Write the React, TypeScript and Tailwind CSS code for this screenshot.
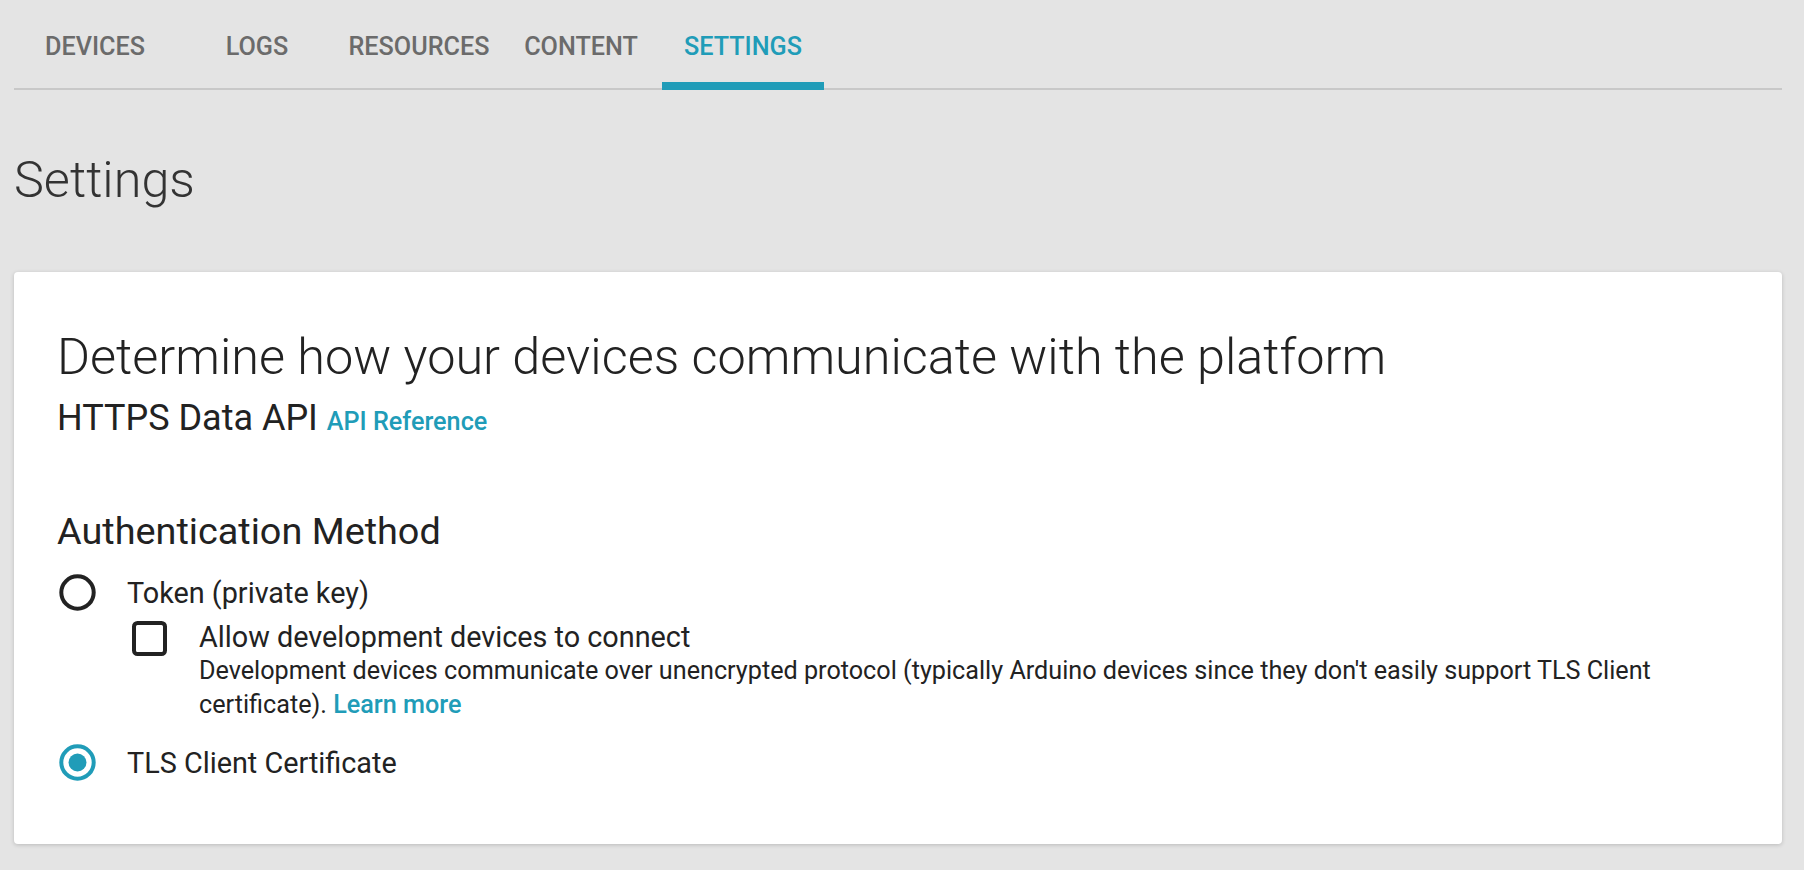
import React from "react";

const tabs = ["DEVICES", "LOGS", "RESOURCES", "CONTENT", "SETTINGS"];

function Radio({ checked }: { checked: boolean }) {
  return (
    <svg width="37" height="37" viewBox="0 0 37 37" className="shrink-0">
      <circle
        cx="18.5"
        cy="18.5"
        r="16.2"
        fill="none"
        stroke={checked ? "#209cb8" : "#222222"}
        strokeWidth="4"
      />
      {checked && <circle cx="18.5" cy="18.5" r="9" fill="#209cb8" />}
    </svg>
  );
}

function Checkbox() {
  return (
    <svg width="35" height="35" viewBox="0 0 35 35" className="shrink-0">
      <rect x="2" y="2" width="31" height="31" rx="3.5" fill="none" stroke="#222222" strokeWidth="4" />
    </svg>
  );
}

export default function App() {
  return (
    <div
      className="min-h-screen w-full bg-[#e4e4e4] text-[#222222]"
      style={{ fontFamily: "Roboto, 'Liberation Sans', sans-serif" }}
    >
      <div className="ml-[14px] mr-[22px]">
        <div className="relative flex h-[90px] border-b-2 border-[#c8c8c8]">
          {tabs.map((t) => {
            const active = t === "SETTINGS";
            return (
              <div
                key={t}
                className={`relative flex w-[162px] justify-center pt-[35px] text-[25.2px] font-medium leading-[24.5px] ${
                  active ? "text-[#209cb8]" : "text-[#6b6b6b]"
                }`}
              >
                {t}
                {active && <span className="absolute -bottom-[2px] left-0 right-0 h-[8px] bg-[#209cb8]" />}
              </div>
            );
          })}
        </div>

        <h1 className="mt-[65px] text-[50.4px] font-light leading-[49px] text-[#333333]">Settings</h1>

        <div className="mt-[68px] h-[572px] rounded-[4px] bg-white pl-[43px] pr-[44px] pt-[62px] shadow-[0_1px_4px_rgba(0,0,0,0.18)]">
          <div className="text-[50.4px] font-light leading-[45.5px]">
            Determine how your devices communicate with the platform
          </div>
          <div className="mt-[21px] leading-[35px]">
            <span className="text-[36px]">HTTPS Data API </span>
            <span className="text-[25.2px] font-medium text-[#209cb8]">API Reference</span>
          </div>

          <div className="mt-[70px] text-[37.8px] leading-[38.5px]">Authentication Method</div>

          <div className="mt-[24px] flex items-center gap-[31px] pl-[2px]">
            <Radio checked={false} />
            <span className="text-[28.8px] leading-[28px]">Token (private key)</span>
          </div>

          <div className="mt-[10px] flex items-start gap-[32px] pl-[75px]">
            <Checkbox />
            <div>
              <div className="pt-[2px] text-[28.8px] leading-[28px]">Allow development devices to connect</div>
              <p className="mt-[3px] max-w-[1530px] text-[25.2px] leading-[34px]">
                Development devices communicate over unencrypted protocol (typically Arduino devices since they don't
                easily support TLS Client certificate). <a className="font-medium text-[#209cb8]">Learn more</a>
              </p>
            </div>
          </div>

          <div className="mt-[22px] flex items-center gap-[31px] pl-[2px]">
            <Radio checked={true} />
            <span className="text-[28.8px] leading-[28px]">TLS Client Certificate</span>
          </div>
        </div>
      </div>
    </div>
  );
}
